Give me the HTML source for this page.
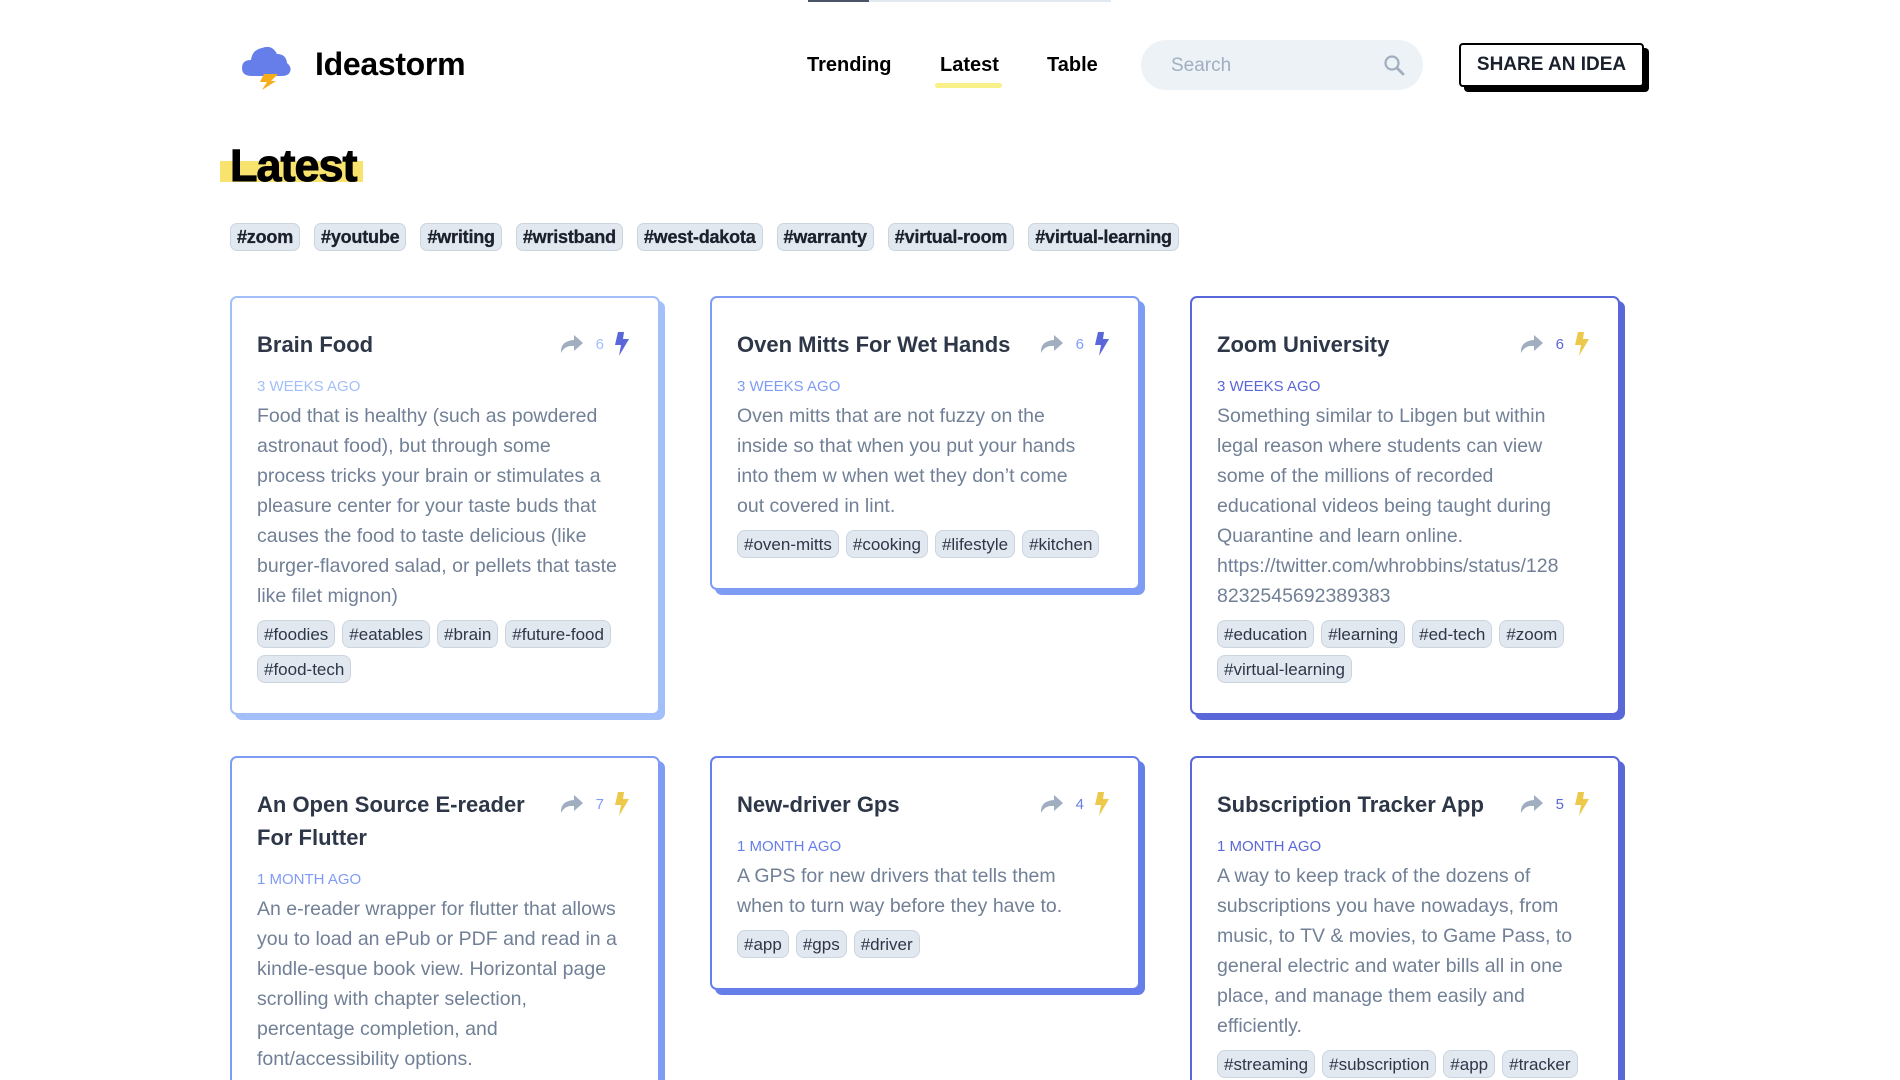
<!DOCTYPE html>
<html><head><meta charset="utf-8"><style>
*{box-sizing:border-box;margin:0;padding:0}
html,body{width:1900px;height:1080px;overflow:hidden;background:#fff;font-family:"Liberation Sans",sans-serif;color:#1a202c}
#wrap{position:relative;width:1900px;height:1080px;overflow:hidden}
.abs{position:absolute}
.brand{left:315px;top:46px;font-size:32px;font-weight:700;letter-spacing:-0.3px;color:#000}
.nav{top:54px;font-size:20px;font-weight:700;color:#000}
.search{left:1141px;top:40px;width:282px;height:50px;border-radius:25px;background:#edf2f7}
.search span{position:absolute;left:30px;top:15px;font-size:19px;color:#a0aec0}
.btn{left:1459px;top:43px;width:185px;height:44px;border:2px solid #000;border-radius:4px;background:#fff;box-shadow:5px 5px 0 #000;font-size:19px;font-weight:700;text-align:center;line-height:40px}
h1{position:absolute;left:230px;top:140px;font-size:45px;font-weight:900;letter-spacing:-1px;color:#000;-webkit-text-stroke:1px #000}
.hl{left:220px;top:161px;width:143px;height:21px;background:#f6e05e;opacity:.9}
.tags{left:230px;top:223px;display:flex;gap:14px}
.tags span{background:#e2e8f0;border:1px solid #cbd5e0;border-radius:7px;font-size:18px;font-weight:700;padding:3px 6px;height:28px;line-height:21px;letter-spacing:-0.2px;-webkit-text-stroke:0.3px #1a202c}
.card{position:absolute;width:430px;border:2px solid;border-radius:7px;background:#fff;padding:30px 28px 28px 25px}
.card h3{font-size:22px;font-weight:700;color:#2d3748;line-height:33px;width:290px}
.meta{position:absolute;right:28px;top:33px;display:flex;align-items:center;gap:8px;font-size:15px}
.date{font-size:15px;text-transform:uppercase;margin-top:16px;line-height:20px}
.body{font-size:19.5px;line-height:30px;color:#718096;white-space:nowrap;margin-top:4px}
.ct{display:flex;flex-wrap:wrap;gap:7px;margin-top:9px}
.ct span{background:#e2e8f0;border:1px solid #cbd5e0;border-radius:8px;font-size:17px;color:#2d3748;padding:0 6px;height:28px;line-height:27px}
</style></head><body><div id="wrap">
<div class="abs" style="left:808px;top:0;width:303px;height:2px;background:#e2e8f0"></div>
<div class="abs" style="left:808px;top:0;width:61px;height:2px;background:#4a5568"></div>
<svg class="abs" style="left:240px;top:40px" width="54" height="50" viewBox="0 0 54 50">
<path d="M12 36 Q2 36 2 28 Q2 20 11 20 Q12 10 22 8 Q32 4 37 14 Q46 14 47 23 Q52 27 50 32 Q48 36 42 36Z" fill="#667eea"/>
<path d="M24 34 L38 34 L31 41 L36 41 L22 50 L27 42 L20 42Z" fill="#f6ad1a"/>
</svg>
<div class="abs brand">Ideastorm</div>
<div class="abs nav" style="left:807px">Trending</div>
<div class="abs nav" style="left:940px">Latest</div>
<div class="abs" style="left:935px;top:83px;width:67px;height:5px;border-radius:3px;background:#faf089"></div>
<div class="abs nav" style="left:1047px">Table</div>
<div class="abs search"><span>Search</span>
<svg style="position:absolute;left:242px;top:14px" width="22" height="22" viewBox="0 0 22 22"><circle cx="9" cy="9" r="6.5" fill="none" stroke="#a0aec0" stroke-width="2.2"/><path d="M14 14 L20 20" stroke="#a0aec0" stroke-width="2.8" stroke-linecap="round"/></svg></div>
<div class="abs btn">SHARE AN IDEA</div>
<div class="abs hl"></div>
<h1>Latest</h1>
<div class="abs tags"><span>#zoom</span><span>#youtube</span><span>#writing</span><span>#wristband</span><span>#west-dakota</span><span>#warranty</span><span>#virtual-room</span><span>#virtual-learning</span></div>

<svg width="0" height="0" style="position:absolute"><defs>
<symbol id="sh" viewBox="0 0 26 22"><path d="M16 2 L25 10 L16 18 L16 13 Q7 12 3 20 Q2 8 16 7Z" fill="#a0aec0"/></symbol>
<symbol id="bo" viewBox="0 0 18 26"><path d="M6 1 L12 1 L11 8 L17 8 L7 25 L9 14 L3 14Z"/></symbol>
</defs></svg>

<div class="card" style="left:230px;top:296px;height:419px;border-color:#a3bffa;box-shadow:5px 5px 0 #a3bffa">
<h3>Brain Food</h3>
<div class="meta"><svg width="26" height="22"><use href="#sh"/></svg><span style="color:#a3bffa;margin-left:4px">6</span><svg width="18" height="26" style="fill:#5a67d8"><use href="#bo"/></svg></div>
<div class="date" style="color:#a3bffa">3 weeks ago</div>
<div class="body">Food that is healthy (such as powdered<br>astronaut food), but through some<br>process tricks your brain or stimulates a<br>pleasure center for your taste buds that<br>causes the food to taste delicious (like<br>burger-flavored salad, or pellets that taste<br>like filet mignon)</div>
<div class="ct"><span>#foodies</span><span>#eatables</span><span>#brain</span><span>#future-food</span><span>#food-tech</span></div>
</div>

<div class="card" style="left:710px;top:296px;height:294px;border-color:#7f9cf5;box-shadow:5px 5px 0 #7f9cf5">
<h3>Oven Mitts For Wet Hands</h3>
<div class="meta"><svg width="26" height="22"><use href="#sh"/></svg><span style="color:#7f9cf5;margin-left:4px">6</span><svg width="18" height="26" style="fill:#5a67d8"><use href="#bo"/></svg></div>
<div class="date" style="color:#7f9cf5">3 weeks ago</div>
<div class="body">Oven mitts that are not fuzzy on the<br>inside so that when you put your hands<br>into them w when wet they don’t come<br>out covered in lint.</div>
<div class="ct"><span>#oven-mitts</span><span>#cooking</span><span>#lifestyle</span><span>#kitchen</span></div>
</div>

<div class="card" style="left:1190px;top:296px;height:419px;border-color:#5a67d8;box-shadow:5px 5px 0 #5a67d8">
<h3>Zoom University</h3>
<div class="meta"><svg width="26" height="22"><use href="#sh"/></svg><span style="color:#5a67d8;margin-left:4px">6</span><svg width="18" height="26" style="fill:#ecc94b"><use href="#bo"/></svg></div>
<div class="date" style="color:#5a67d8">3 weeks ago</div>
<div class="body">Something similar to Libgen but within<br>legal reason where students can view<br>some of the millions of recorded<br>educational videos being taught during<br>Quarantine and learn online.<br>https://twitter.com/whrobbins/status/128<br>8232545692389383</div>
<div class="ct"><span>#education</span><span>#learning</span><span>#ed-tech</span><span>#zoom</span><span>#virtual-learning</span></div>
</div>

<div class="card" style="left:230px;top:756px;height:500px;border-color:#7f9cf5;box-shadow:5px 5px 0 #7f9cf5">
<h3>An Open Source E-reader For Flutter</h3>
<div class="meta"><svg width="26" height="22"><use href="#sh"/></svg><span style="color:#7f9cf5;margin-left:4px">7</span><svg width="18" height="26" style="fill:#ecc94b"><use href="#bo"/></svg></div>
<div class="date" style="color:#7f9cf5">1 month ago</div>
<div class="body">An e-reader wrapper for flutter that allows<br>you to load an ePub or PDF and read in a<br>kindle-esque book view. Horizontal page<br>scrolling with chapter selection,<br>percentage completion, and<br>font/accessibility options.</div>
</div>

<div class="card" style="left:710px;top:756px;height:234px;border-color:#667eea;box-shadow:5px 5px 0 #667eea">
<h3>New-driver Gps</h3>
<div class="meta"><svg width="26" height="22"><use href="#sh"/></svg><span style="color:#667eea;margin-left:4px">4</span><svg width="18" height="26" style="fill:#ecc94b"><use href="#bo"/></svg></div>
<div class="date" style="color:#667eea">1 month ago</div>
<div class="body">A GPS for new drivers that tells them<br>when to turn way before they have to.</div>
<div class="ct"><span>#app</span><span>#gps</span><span>#driver</span></div>
</div>

<div class="card" style="left:1190px;top:756px;height:500px;border-color:#5a67d8;box-shadow:5px 5px 0 #5a67d8">
<h3>Subscription Tracker App</h3>
<div class="meta"><svg width="26" height="22"><use href="#sh"/></svg><span style="color:#5a67d8;margin-left:4px">5</span><svg width="18" height="26" style="fill:#ecc94b"><use href="#bo"/></svg></div>
<div class="date" style="color:#5a67d8">1 month ago</div>
<div class="body">A way to keep track of the dozens of<br>subscriptions you have nowadays, from<br>music, to TV &amp; movies, to Game Pass, to<br>general electric and water bills all in one<br>place, and manage them easily and<br>efficiently.</div>
<div class="ct"><span>#streaming</span><span>#subscription</span><span>#app</span><span>#tracker</span></div>
</div>
</div></body></html>
